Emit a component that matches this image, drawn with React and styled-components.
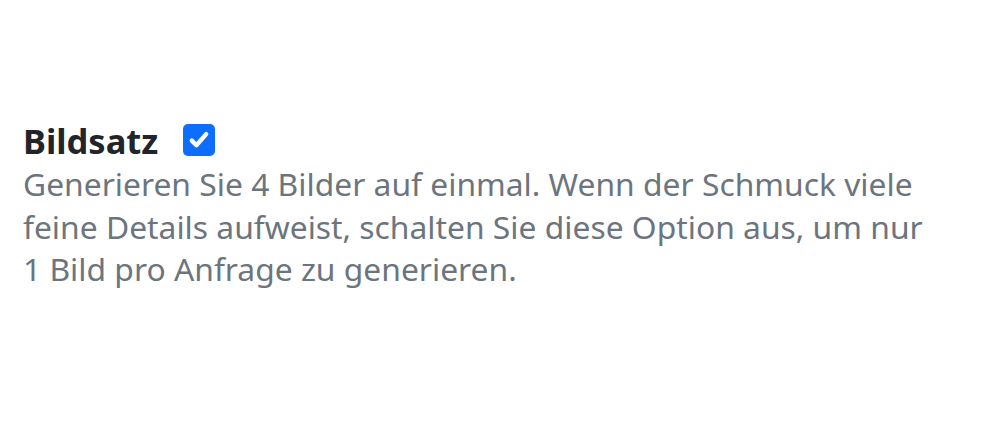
import styled, { createGlobalStyle } from "styled-components";

const GlobalStyle = createGlobalStyle`
  html, body {
    margin: 0;
    padding: 0;
    background: #ffffff;
  }
  body {
    font-family: "Noto Sans", "Open Sans", sans-serif;
  }
`;

const Page = styled.div`
  width: 1000px;
  height: 433px;
  box-sizing: border-box;
  padding: 118px 0 0 23px;
`;

const Field = styled.div`
  width: 960px;
`;

const Header = styled.label`
  display: flex;
  align-items: center;
  gap: 25px;
  height: 44px;
`;

const Title = styled.span`
  font-size: 34.5px;
  font-weight: 700;
  color: #212529;
`;

const Check = styled.span`
  width: 32px;
  height: 32px;
  box-sizing: border-box;
  border-radius: 5px;
  background: #0d6efd;
  display: flex;
  align-items: center;
  justify-content: center;
`;

const Help = styled.p`
  margin: 1px 0 0;
  font-size: 31.8px;
  line-height: 42.5px;
  color: #6c757d;
  white-space: nowrap;
`;

const App = () => {
  return (
    <>
      <GlobalStyle />
      <Page>
        <Field>
          <Header>
            <Title>Bildsatz</Title>
            <Check>
              <svg width="26" height="26" viewBox="0 0 20 20" fill="none">
                <path
                  d="M4.5 10.5l3.5 3.5 7.5-8.5"
                  stroke="#fff"
                  strokeWidth="3.4"
                  strokeLinecap="round"
                  strokeLinejoin="round"
                />
              </svg>
            </Check>
          </Header>
          <Help>
            Generieren Sie 4 Bilder auf einmal. Wenn der Schmuck viele
            <br />
            feine Details aufweist, schalten Sie diese Option aus, um nur
            <br />1 Bild pro Anfrage zu generieren.
          </Help>
        </Field>
      </Page>
    </>
  );
};

export default App;
